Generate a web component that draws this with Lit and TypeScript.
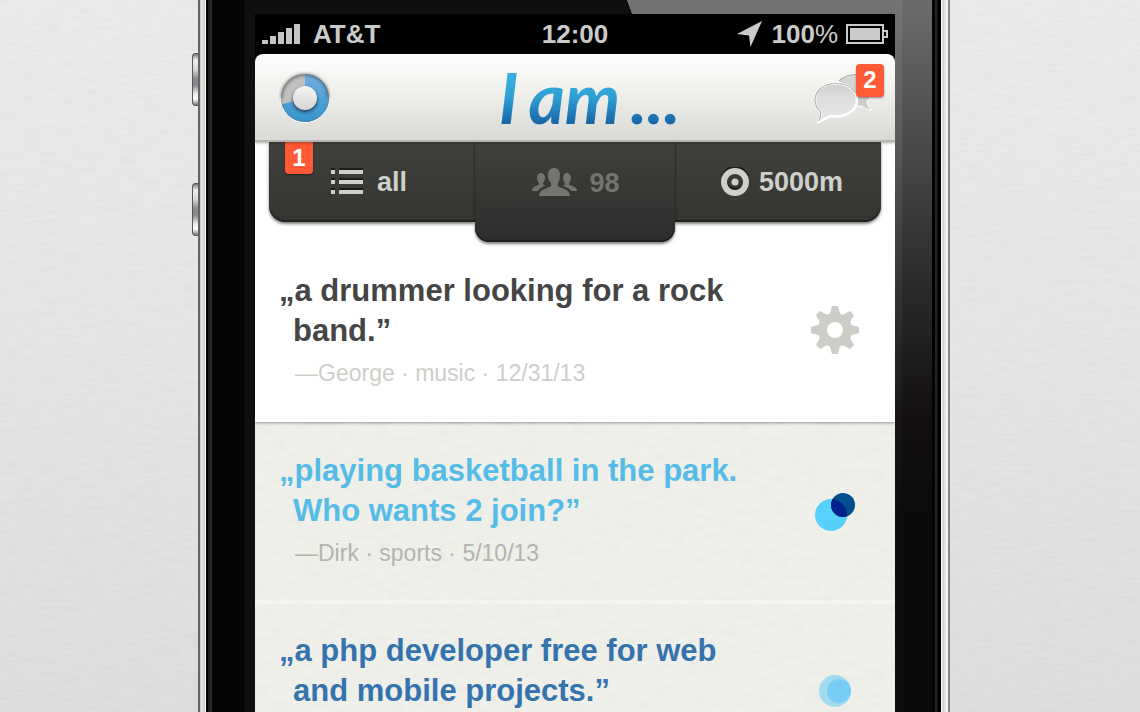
import { LitElement, html, css, svg, nothing } from "lit";
import { customElement, property } from "lit/decorators.js";

interface Post {
  text: string;
  meta?: string;
  tone: "own" | "sky" | "blue";
}

const posts: Post[] = [
  { text: "a drummer looking for a rock band.", meta: "George · music · 12/31/13", tone: "own" },
  { text: "playing basketball in the park. Who wants 2 join?", meta: "Dirk · sports · 5/10/13", tone: "sky" },
  { text: "a php developer free for web and mobile projects.", tone: "blue" },
];

const tooth = (angle: number) => svg`
  <path transform="rotate(${angle} 24 24)" d="M16.500 9.500 C19.500 8 19.800 5 20.600 1.200 Q20.800 0 22 0 H26 Q27.200 0 27.400 1.200 C28.200 5 28.500 8 31.500 9.500 Z" />`;

const gear = html`
  <svg width="48" height="48" viewBox="0 0 48 48" aria-hidden="true" fill="#cccdc7">
    ${[0, 45, 90, 135, 180, 225, 270, 315].map(tooth)}
    <circle cx="24" cy="24" r="12.500" fill="none" stroke="#cccdc7" stroke-width="9" />
  </svg>`;

const overlapMark = html`
  <svg width="48" height="48" viewBox="0 0 48 48" aria-hidden="true">
    <defs><clipPath id="big"><circle cx="20" cy="29" r="16" /></clipPath></defs>
    <circle cx="20" cy="29" r="16" fill="#59d1fd" />
    <circle cx="32" cy="19" r="12" fill="#00508f" />
    <circle cx="32" cy="19" r="12" fill="#00218d" clip-path="url(#big)" />
  </svg>`;

const insideMark = html`
  <svg width="48" height="48" viewBox="0 0 48 48" aria-hidden="true">
    <circle cx="24" cy="25" r="16" fill="#a2dcee" />
    <circle cx="28" cy="25" r="12" fill="#77cef6" />
  </svg>`;

@customElement("post-card")
export class PostCard extends LitElement {
  @property({ attribute: false }) post!: Post;

  static styles = css`
    :host {
      display: block;
    }
    .card {
      display: flex;
      align-items: flex-start;
      gap: 48px;
      min-height: 180px;
      box-sizing: border-box;
      padding: 27px 36px 32px 24px;
      border-bottom: 4px solid #f5f5f2;
    }
    .card.own {
      padding-top: 29px;
      border-bottom: 0;
    }
    .body {
      flex: 1;
      min-width: 0;
      padding-left: 14px;
    }
    .quote {
      margin: 0;
      font-size: 31px;
      font-weight: 700;
      line-height: 40px;
      text-indent: -14px;
    }
    .own .quote { color: #454545; }
    .sky .quote { color: #56bde8; }
    .blue .quote { color: #3574ae; }
    .meta {
      margin: 7px 0 0;
      padding-left: 2px;
      font-size: 23px;
      line-height: 30px;
      color: #b4b4b0;
    }
    .own .meta { color: #cdcec9; }
    .action {
      display: block;
      margin: 35px 0 0;
      padding: 0;
      border: 0;
      background: none;
      cursor: pointer;
    }
    .action svg { display: block; }
  `;

  render() {
    const p = this.post;
    const icon = p.tone === "own" ? gear : p.tone === "sky" ? overlapMark : insideMark;
    return html`
      <article class="card ${p.tone}">
        <div class="body">
          <p class="quote">${`„${p.text}”`}</p>
          ${p.meta ? html`<p class="meta">${`—${p.meta}`}</p>` : nothing}
        </div>
        <button class="action" aria-label=${p.tone === "own" ? "Settings" : "Match"}>${icon}</button>
      </article>
    `;
  }
}

@customElement("app-root")
export class AppRoot extends LitElement {
  static styles = css`
    :host {
      display: block;
      font-family: "Liberation Sans", Arial, sans-serif;
    }
    * { box-sizing: border-box; }
    svg { display: block; }
    button {
      margin: 0;
      padding: 0;
      border: 0;
      background: none;
      font: inherit;
      color: inherit;
      cursor: pointer;
    }
    .stage {
      position: relative;
      display: flex;
      justify-content: center;
      height: 100vh;
      overflow: hidden;
      background: linear-gradient(#ebeae8, #e7e6e6 45%, #dedddd);
    }
    .grain {
      position: absolute;
      inset: 0;
      width: 100%;
      height: 100%;
      opacity: 0.02;
      pointer-events: none;
    }
    .keys {
      position: relative;
      flex: none;
      width: 8px;
      padding: 53px 0 0 2px;
      display: flex;
      flex-direction: column;
      gap: 77px;
    }
    .key {
      height: 53px;
      border: 1px solid #55565a;
      border-right: 0;
      border-radius: 4px 0 0 4px;
      background: linear-gradient(#77787a, #f0f0f0 12%, #d8d8d8 30%, #8c8c8e 48%, #85858a 60%, #ececec 78%, #fff 88%, #77787a);
    }
    .phone {
      position: relative;
      display: grid;
      grid-template-columns: 57px minmax(0, 640px) 55px;
      width: 752px;
      max-width: calc(100% - 8px);
    }
    .edge-left {
      background: linear-gradient(90deg, #646464 0 2px, #cfcdca 2px 3px, #e5e3e0 3px 5px, #d3d1ce 5px 7px, #fff 7px 8px,
        #000 8px 10px, #1b1b1d 10px 12px, #2c2c2e 12px 14px, #000 14px 15px, #060405 15px 46px, #0f0f10 47px);
    }
    .edge-right {
      display: grid;
      grid-template-columns: 7px 1fr 18px;
    }
    .glare-inner { background: linear-gradient(#757575, #5c5c5c 130px, #383838 270px, #161616 420px, #0c0c0c 520px); }
    .glare { background: linear-gradient(#6c6c6c, #4e4d4e 130px, #2c2b2c 280px, #130f11 420px, #0b0a0b 520px); }
    .rim {
      background: linear-gradient(90deg, #000 0 3px, #242325 3px 5px, #0e0d0e 5px 6px, #000 6px 9px, #fff 9px 10px,
        #d8d6d6 10px 12px, #e4e2e0 12px 14px, #f4f4f4 14px 16px, #858587 16px 18px);
    }
    .screen {
      display: flex;
      flex-direction: column;
      min-width: 0;
      overflow: hidden;
      background: #000;
    }
    .bezel {
      flex: none;
      height: 14px;
      background: linear-gradient(70deg, #0f0f10 58.400%, #727272 58.500%);
    }
    .status {
      flex: none;
      display: grid;
      grid-template-columns: 1fr auto 1fr;
      align-items: center;
      height: 40px;
      padding: 0 7px;
      font-size: 26px;
      font-weight: 700;
      line-height: 40px;
      color: #cbcbcb;
    }
    .carrier,
    .power {
      display: flex;
      align-items: center;
      gap: 12px;
    }
    .power {
      justify-content: flex-end;
      gap: 8px;
    }
    .percent { font-weight: 400; }
    .top {
      position: relative;
      z-index: 2;
      flex: none;
      display: grid;
      grid-template-columns: 1fr auto 1fr;
      align-items: center;
      height: 88px;
      padding: 0 11px 0 24px;
      border-bottom: 2px solid #b5b6b1;
      border-radius: 8px 8px 0 0;
      background: linear-gradient(#fdfdfc, #f3f3f0 35%, #d9dad5);
      box-shadow: 0 1px 3px rgba(0, 0, 0, 0.35);
    }
    .brand {
      display: flex;
      gap: 10px;
      margin: 0;
      padding: 0 0 0 16px;
      font-family: Lato, "Liberation Sans", sans-serif;
      font-size: 70px;
      font-weight: 700;
      font-style: italic;
      line-height: 84px;
      color: transparent;
      background: linear-gradient(#35b0e0 25%, #2f9fd5 50%, #1968a8 80%);
      -webkit-background-clip: text;
      background-clip: text;
    }
    .chat {
      position: relative;
      justify-self: end;
      width: 72px;
      height: 66px;
    }
    .badge {
      display: block;
      width: 28px;
      height: 33px;
      border-radius: 4px;
      background: #ff5a35;
      color: #fff;
      font-size: 24px;
      font-weight: 700;
      line-height: 32px;
      text-align: center;
      box-shadow: 0 1px 2px rgba(0, 0, 0, 0.4);
    }
    .chat .badge {
      position: absolute;
      top: 0;
      right: 0;
    }
    .content {
      position: relative;
      flex: 1 0 auto;
      background: #f0f0eb;
    }
    .featured {
      position: relative;
      background: #fff;
      box-shadow: 0 1px 3px rgba(0, 0, 0, 0.4);
    }
    .tabs {
      display: grid;
      grid-template-columns: 1fr 200px 1fr;
      align-items: start;
      margin: 0 14px;
      font-size: 27px;
      font-weight: 700;
      color: #cfd0ca;
      text-shadow: 0 -2px 1px rgba(0, 0, 0, 0.6);
    }
    .tab {
      position: relative;
      display: flex;
      align-items: center;
      justify-content: center;
      gap: 12px;
      height: 80px;
      background: linear-gradient(#40413c, #343431);
      box-shadow: inset 0 -2px 1px #242422, 0 2px 3px rgba(0, 0, 0, 0.5);
    }
    .tab.first {
      justify-content: flex-start;
      padding-left: 62px;
      border-radius: 0 0 0 16px;
    }
    .tab.last {
      gap: 10px;
      padding-left: 8px;
      border-radius: 0 0 16px 0;
    }
    .tab.middle {
      z-index: 1;
      height: 100px;
      padding-bottom: 17px;
      padding-left: 2px;
      border-radius: 0 0 14px 14px;
      background: linear-gradient(#40413c, #2d2d2c);
      box-shadow: inset 0 -2px 1px #1f1f1e, 0 2px 3px rgba(0, 0, 0, 0.5);
      color: #74746e;
      text-shadow: none;
    }
    .tab .badge {
      position: absolute;
      top: 0;
      left: 16px;
      height: 32px;
      border-radius: 0 0 4px 4px;
      text-shadow: none;
    }
    .feed {
      padding-top: 2px;
    }
  `;

  render() {
    return html`
      <main class="stage">
        <svg class="grain" aria-hidden="true">
          <filter id="paper">
            <feTurbulence type="fractalNoise" baseFrequency="0.05 0.3" numOctaves="3" seed="4" />
            <feColorMatrix values="0 0 0 0 0  0 0 0 0 0  0 0 0 0 0  1.500 0 0 0 -0.500" />
          </filter>
          <rect width="100%" height="100%" filter="url(#paper)" />
        </svg>
        <div class="keys"><div class="key"></div><div class="key"></div></div>
        <div class="phone">
          <div class="edge-left"></div>
          <div class="screen">
            <div class="bezel"></div>
            <div class="status">
              <div class="carrier">
                <svg width="39" height="20" viewBox="0 0 39 20" fill="#c4c4c4" aria-hidden="true">
                  <path d="M0 16h6v4H0zM8 12h6v8H8zM16 8h6v12h-6zM24 4h6v16h-6zM32 0h6v20h-6z" />
                </svg>
                <span>AT&amp;T</span>
              </div>
              <span>12:00</span>
              <div class="power">
                <svg width="26" height="26" viewBox="0 0 26 26" fill="#cbcbcb" aria-hidden="true">
                  <path d="M25 0 L13.500 26 L12 14.500 L0 13 Z" />
                </svg>
                <span>100<span class="percent">%</span></span>
                <svg width="42" height="20" viewBox="0 0 42 20" aria-hidden="true">
                  <rect x="1" y="1" width="36" height="18" fill="none" stroke="#cbcbcb" stroke-width="2" />
                  <rect x="4" y="4" width="30" height="12" fill="#cbcbcb" />
                  <path d="M37 7h4v6h-4" fill="none" stroke="#cbcbcb" stroke-width="2" />
                </svg>
              </div>
            </div>
            <header class="top">
              <button aria-label="Radar">
                <svg width="52" height="52" viewBox="0 0 52 52" aria-hidden="true">
                  <defs>
                    <linearGradient id="ring" x1="0" y1="0" x2="0" y2="1">
                      <stop offset="0" stop-color="#72aee0" /><stop offset="1" stop-color="#3494cc" />
                    </linearGradient>
                    <linearGradient id="knob" x1="0" y1="0" x2="0" y2="1">
                      <stop offset="0" stop-color="#f4f4f4" /><stop offset="1" stop-color="#d5d5d5" />
                    </linearGradient>
                    <filter id="soft" x="-30%" y="-30%" width="160%" height="160%"><feGaussianBlur stdDeviation="1.500" /></filter>
                  </defs>
                  <circle cx="26" cy="28" r="24" fill="#fff" />
                  <circle cx="26" cy="27" r="24" fill="#bfbfc0" />
                  <path d="M26 27V3a24 24 0 1 1-23.200 30.200z" fill="url(#ring)" />
                  <path d="M2.500 27a23.500 23.500 0 0 1 47 0" fill="none" stroke="#444" stroke-opacity=".7" stroke-width="2" filter="url(#soft)" />
                  <circle cx="26" cy="27" r="23.500" fill="none" stroke="#5b7180" stroke-opacity=".5" />
                  <circle cx="26" cy="29" r="12.500" fill="#223" opacity=".65" filter="url(#soft)" />
                  <circle cx="26" cy="27" r="12" fill="url(#knob)" />
                </svg>
              </button>
              <h1 class="brand"><span>I</span><span>am</span><span>...</span></h1>
              <button class="chat" aria-label="Messages">
                <svg width="72" height="66" viewBox="0 0 72 66" aria-hidden="true">
                  <defs>
                    <linearGradient id="bubble" x1="0" y1="0" x2="0" y2="1">
                      <stop offset="0" stop-color="#cfcfcf" /><stop offset="0.350" stop-color="#dedede" /><stop offset="1" stop-color="#e6e6e6" />
                    </linearGradient>
                    <linearGradient id="back" x1="0" y1="0" x2="0" y2="1">
                      <stop offset="0" stop-color="#d8d8d8" /><stop offset="1" stop-color="#c9c9c9" />
                    </linearGradient>
                  </defs>
                  <path d="M27 17C31 13 36 10.500 42 10.500C53 10.500 60 17 60 26C60 31 58 35 55 37C55 41 57 44 60 46C55 45.500 52 44 50 42L44 42Z" fill="url(#back)" stroke="#fff" stroke-width="1" />
                  <path d="M27 17C31 13 36 10.500 44 10.500" fill="none" stroke="#aaa" stroke-width="1.200" />
                  <path d="M24 19.500C36 19.500 45 26.500 45 36C45 45.500 36 52.500 24 52.500C22 52.500 20 52.300 18 52C14 54.500 10 57 6 58.500C8 55 9 51 8.500 47.500C5 44.500 3 40.500 3 36C3 26.500 12 19.500 24 19.500Z" fill="url(#bubble)" stroke="#fff" stroke-width="2.400" stroke-linejoin="round" />
                  <path d="M6.500 57C8.500 54 9 51 8.500 47.500C5 44.500 3 40.500 3 36C3 26.500 12 19.500 24 19.500C33 19.500 40 23 43.500 29" fill="none" stroke="#b2b2b2" stroke-width="1.200" />
                </svg>
                <span class="badge">2</span>
              </button>
            </header>
            <div class="content">
              <svg class="grain" aria-hidden="true">
                <filter id="fiber">
                  <feTurbulence type="fractalNoise" baseFrequency="0.06 0.15" numOctaves="3" seed="9" />
                  <feColorMatrix values="0 0 0 0 0  0 0 0 0 0  0 0 0 0 0  1.500 0 0 0 -0.500" />
                </filter>
                <rect width="100%" height="100%" filter="url(#fiber)" />
              </svg>
              <section class="featured">
                <nav class="tabs">
                  <button class="tab first">
                    <span class="badge">1</span>
                    <svg width="34" height="28" viewBox="0 0 34 28" aria-hidden="true">
                      <path d="M0 0h4v4H0zM8 0h24v4H8zM0 10h4v4H0zM8 10h24v4H8zM0 20h4v4H0zM8 20h24v4H8z" fill="#1c1c1a" />
                      <path d="M0 2h4v4H0zM8 2h24v4H8zM0 12h4v4H0zM8 12h24v4H8zM0 22h4v4H0zM8 22h24v4H8z" fill="#cfd0ca" />
                    </svg>
                    <span>all</span>
                  </button>
                  <button class="tab middle">
                    <svg width="45" height="32" viewBox="0 0 45 32" fill="#74746e" aria-hidden="true">
                      <path d="M22 0c4 0 6 3 6 7 0 4-1 6-2 8v3c4 3 12 3 12 10H7c0-7 8-7 12-10v-3c-2-2-3-4-3-8 0-4 2-7 6-7z" />
                      <path d="M9 5c2.500 0 4 2 4 5 0 2-1 4-2 5v1.500l2.500 1C10 19 7 20.500 6 23H0c0-4 3-4.500 7-6.500V15c-1-1-2-3-2-5 0-3 1.500-5 4-5z" />
                      <path d="M35 5c-2.500 0-4 2-4 5 0 2 1 4 2 5v1.500l-2.500 1C34 19 38 20.500 39 23H45c0-4-4-4.500-8-6.500V15c1-1 2-3 2-5 0-3-1.500-5-4-5z" />
                    </svg>
                    <span>98</span>
                  </button>
                  <button class="tab last">
                    <svg width="28" height="30" viewBox="0 0 28 30" aria-hidden="true">
                      <circle cx="14" cy="13" r="11" fill="none" stroke="#1c1c1a" stroke-width="6" />
                      <circle cx="14" cy="15" r="11" fill="none" stroke="#cfd0ca" stroke-width="6" />
                      <circle cx="14" cy="15" r="3.500" fill="#cfd0ca" />
                    </svg>
                    <span>5000m</span>
                  </button>
                </nav>
                <post-card .post=${posts[0]}></post-card>
              </section>
              <section class="feed">
                ${posts.slice(1).map((p) => html`<post-card .post=${p}></post-card>`)}
              </section>
            </div>
          </div>
          <div class="edge-right">
            <div class="glare-inner"></div>
            <div class="glare"></div>
            <div class="rim"></div>
          </div>
        </div>
      </main>
    `;
  }
}
